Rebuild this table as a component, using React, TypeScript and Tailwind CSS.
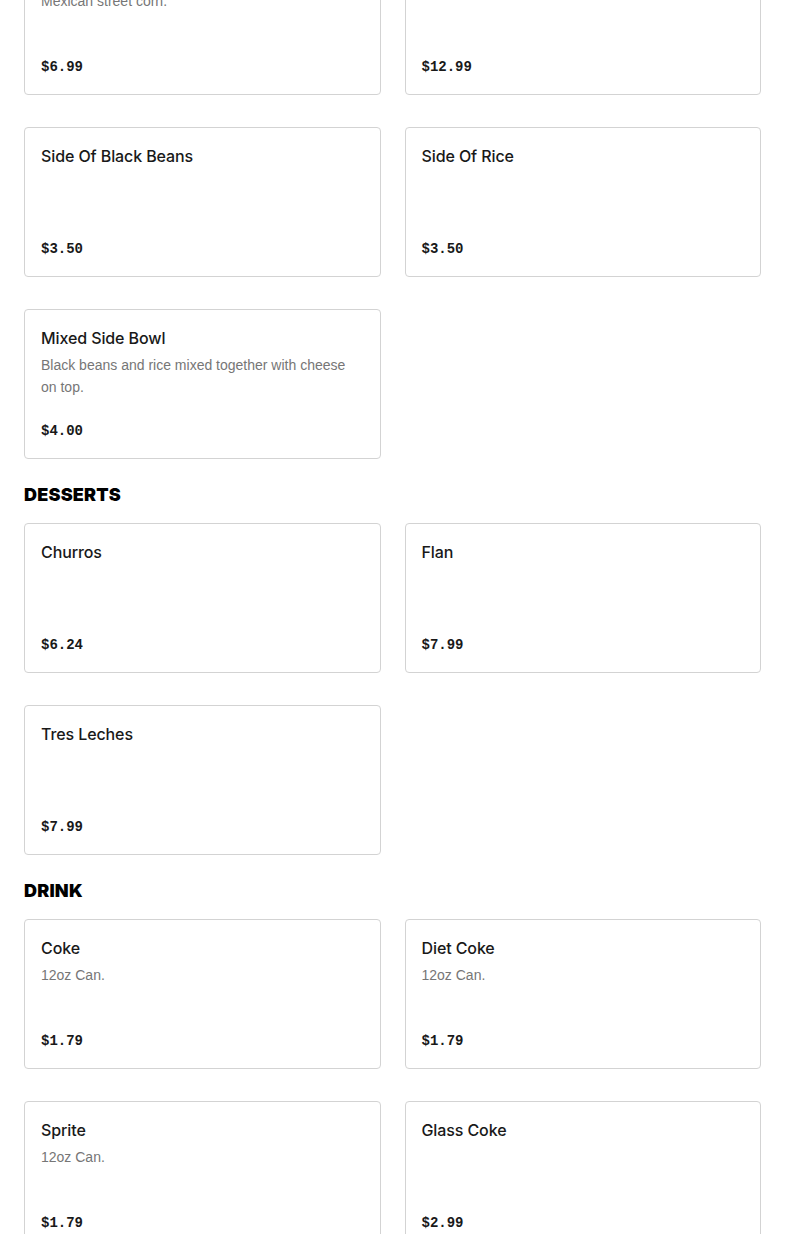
type Item = {
  name: string;
  desc?: string;
  price: string;
};

type Section = {
  title?: string;
  items: Item[];
};

const sections: Section[] = [
  {
    items: [
      { name: "Elote", desc: "Mexican street corn.", price: "$6.99" },
      { name: "Nachos Supreme", price: "$12.99" },
      { name: "Side Of Black Beans", price: "$3.50" },
      { name: "Side Of Rice", price: "$3.50" },
      {
        name: "Mixed Side Bowl",
        desc: "Black beans and rice mixed together with cheese on top.",
        price: "$4.00",
      },
    ],
  },
  {
    title: "Desserts",
    items: [
      { name: "Churros", price: "$6.24" },
      { name: "Flan", price: "$7.99" },
      { name: "Tres Leches", price: "$7.99" },
    ],
  },
  {
    title: "Drink",
    items: [
      { name: "Coke", desc: "12oz Can.", price: "$1.79" },
      { name: "Diet Coke", desc: "12oz Can.", price: "$1.79" },
      { name: "Sprite", desc: "12oz Can.", price: "$1.79" },
      { name: "Glass Coke", price: "$2.99" },
    ],
  },
];

function MenuCard({ item }: { item: Item }) {
  return (
    <div className="flex h-[150px] flex-col justify-between rounded-[4px] border border-[#d3d3d3] bg-white px-4 pb-[15px] pt-4">
      <div>
        <div className="text-[16px] font-medium leading-6 tracking-[-0.1px] text-[#191919]">
          {item.name}
        </div>
        {item.desc && (
          <p className="mt-1 font-['Liberation_Sans',Arial,sans-serif] text-[14px] leading-[22px] text-[#767676]">
            {item.desc}
          </p>
        )}
      </div>
      <div className="font-['Liberation_Mono',monospace] text-[14px] font-bold leading-6 text-[#191919]">
        {item.price}
      </div>
    </div>
  );
}

export default function App() {
  return (
    <div className="min-h-screen overflow-hidden bg-white px-6 font-['Inter',sans-serif]">
      <div className="-mt-[55px]">
        {sections.map((section, i) => (
          <div key={i}>
            {section.title && (
              <h2 className="pb-[14px] pt-[22px] text-[18px] font-black uppercase leading-7 tracking-[0.2px] text-black">
                {section.title}
              </h2>
            )}
            <div className="grid grid-cols-2 gap-x-6 gap-y-8">
              {section.items.map((item) => (
                <MenuCard key={item.name} item={item} />
              ))}
            </div>
          </div>
        ))}
      </div>
    </div>
  );
}
